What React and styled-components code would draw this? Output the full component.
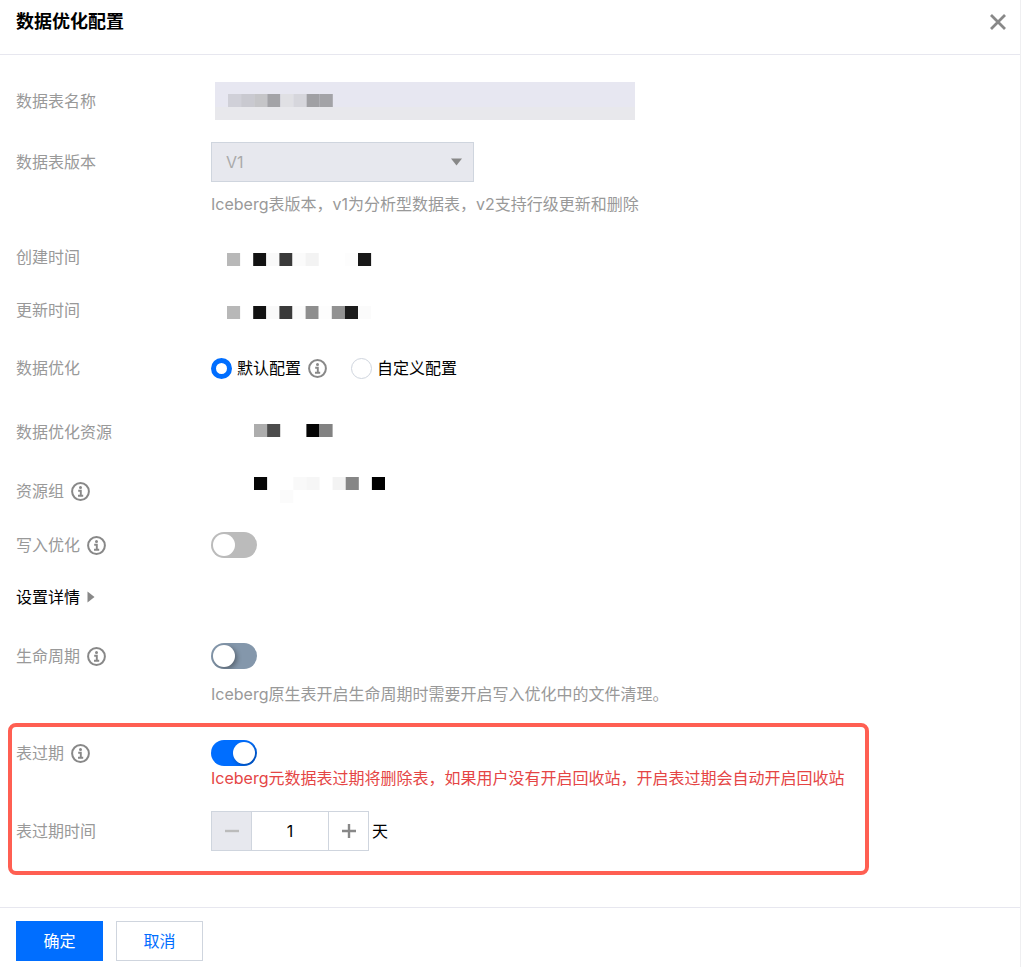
import React, { useState } from 'react';
import styled, { createGlobalStyle } from 'styled-components';

const GlobalStyle = createGlobalStyle`
  * {
    box-sizing: border-box;
  }
  body {
    margin: 0;
    background: #fff;
  }
  body, button, input, select {
    font-family: Inter, "Noto Sans CJK SC", sans-serif;
    font-size: 16px;
    line-height: 24px;
  }
`;

const Drawer = styled.main`
  display: flex;
  flex-direction: column;
  min-height: 100vh;
  border-right: 1px solid #efeff1;
  color: #000;
`;

const Header = styled.header`
  display: flex;
  align-items: center;
  justify-content: space-between;
  height: 55px;
  padding: 0 14px 11px 16px;
  border-bottom: 1px solid #e7e7ef;
`;

const Title = styled.h1`
  margin: 0;
  font-size: 18px;
  line-height: 24px;
  font-weight: 700;
`;

const CloseButton = styled.button`
  display: flex;
  padding: 0;
  border: 0;
  background: none;
  cursor: pointer;
`;

const Content = styled.form`
  flex: 1;
  padding: 27px 16px 32px;
`;

const Row = styled.div`
  display: grid;
  grid-template-columns: 195px 1fr;
  align-items: ${(p) => p.$align || 'center'};
  margin-top: ${(p) => p.$gap || 0}px;
`;

const Label = styled.label`
  display: flex;
  align-items: center;
  gap: 7px;
  color: #999;
`;

const Control = styled.div`
  display: flex;
  align-items: center;
`;

const Hint = styled.p`
  margin: ${(p) => p.$gap || 0}px 0 0 195px;
  color: ${(p) => (p.$warn ? '#e54545' : '#999')};
`;

const NameField = styled.div`
  position: relative;
  width: 420px;
  margin-left: 4px;
`;

const NameInput = styled.input`
  display: block;
  width: 100%;
  height: 38px;
  border: 0;
  background: linear-gradient(#e7e7f1 66%, #e8e8ec 66%);
`;

// blocks that cover the hidden value of the name field
const NameCover = styled.div`
  position: absolute;
  top: 8px;
  left: 13px;
`;

const Blocks = styled.svg`
  display: block;
  margin: 4px 0 0 ${(p) => p.$indent || 0}px;
`;

const SelectBox = styled.div`
  display: grid;
  align-items: center;
  width: 263px;

  & > * {
    grid-area: 1 / 1;
  }
  & > svg {
    justify-self: end;
    margin-right: 12px;
    pointer-events: none;
  }
`;

const Select = styled.select`
  appearance: none;
  width: 100%;
  height: 40px;
  padding: 0 14px;
  border: 1px solid #cfd5de;
  border-radius: 0;
  background: #e7e8ee;
  color: #aaa;
  opacity: 1;
`;

const RadioLabel = styled.label`
  display: flex;
  align-items: center;
  gap: 5px;
`;

const Radio = styled.input`
  appearance: none;
  width: 21px;
  height: 21px;
  margin: 0;
  border: 1px solid #cfd5de;
  border-radius: 50%;
  background: #fff;

  &:checked {
    border: 5px solid #006eff;
  }
`;

const IconGap = styled.span`
  display: flex;
  margin: 0 24px 0 7px;
`;

const Toggle = styled.input`
  appearance: none;
  display: flex;
  align-items: center;
  width: 46px;
  height: 26px;
  margin: 0;
  padding: 0 2px;
  border-radius: 13px;
  background: ${(p) => p.$off || '#8497ab'};
  overflow: hidden;
  cursor: pointer;

  &::before {
    content: '';
    width: 22px;
    height: 22px;
    border-radius: 50%;
    background: #fff;
    box-shadow: ${(p) => (p.disabled ? 'none' : '2px 2px 5px rgba(0, 0, 0, 0.35)')};
  }
  &:checked {
    justify-content: flex-end;
    background: #006eff;
  }
`;

const DetailButton = styled.button`
  display: flex;
  align-items: center;
  gap: 7px;
  margin-top: 27px;
  padding: 0;
  border: 0;
  background: none;
  color: #000;
  cursor: pointer;
`;

const ExpireBox = styled.section`
  max-width: 861px;
  margin: 17px 0 0 -8px;
  padding: 13px 4px 20px;
  border: 4px solid #ff5f52;
  border-radius: 8px;
`;

const Stepper = styled.div`
  display: flex;
  width: 158px;
  height: 40px;
  margin-right: 3px;
  border: 1px solid #cfd5de;
`;

const StepButton = styled.button`
  display: flex;
  align-items: center;
  justify-content: center;
  width: 39px;
  padding: 0;
  border: 0;
  background: #fff;
  color: #888;

  &:disabled {
    background: #e7e8ee;
    color: #bbb;
  }
`;

const StepInput = styled.input`
  flex: 1;
  min-width: 0;
  padding: 0;
  border: solid #cfd5de;
  border-width: 0 1px;
  text-align: center;
  color: #000;
`;

const Footer = styled.footer`
  display: flex;
  gap: 13px;
  padding: 13px 16px 6px;
  border-top: 1px solid #e7e7ef;
`;

const Button = styled.button`
  width: 87px;
  height: 40px;
  padding: 0;
  border: 1px solid ${(p) => (p.$primary ? '#006eff' : '#cfd5de')};
  background: ${(p) => (p.$primary ? '#006eff' : '#fff')};
  color: ${(p) => (p.$primary ? '#fff' : '#006eff')};
  cursor: pointer;
`;

const InfoIcon = () => (
  <svg width="19" height="19" viewBox="0 0 19 19" fill="none" stroke="#888" aria-hidden="true">
    <circle cx="9.5" cy="9.5" r="8.4" strokeWidth="2" />
    <circle cx="9.5" cy="5.6" r="1.5" fill="#888" stroke="none" />
    <path d="M7.2 8.7h2.6v5M7 13.7h5.2" strokeWidth="1.9" />
  </svg>
);

const CELL = 13.1;

// every row is a list of [column, colour]
const Mosaic = ({ rows, indent }) => {
  const cols = Math.max(...rows.flat().map(([col]) => col)) + 1;
  return (
    <Blocks $indent={indent} width={Math.ceil(cols * CELL)} height={rows.length * 13} aria-hidden="true">
      {rows.map((row, y) =>
        row.map(([col, fill]) => (
          <rect key={`${y}-${col}`} x={col * CELL} y={y * 13} width={CELL} height="13" fill={fill} />
        ))
      )}
    </Blocks>
  );
};

const nameBlocks = [[
  [0, '#d0d0d8'], [1, '#c9c9d0'], [2, '#c5c5c8'], [3, '#a3a3a7'],
  [4, '#e0e0e4'], [5, '#d6d6dc'], [6, '#a0a0a4'], [7, '#a3a3a7'],
]];
const createdBlocks = [[
  [0, '#b8b8b8'], [2, '#121212'], [3, '#f9f9f9'], [4, '#3a3a3a'],
  [5, '#fbfbfb'], [6, '#f3f3f3'], [9, '#fdfdfd'], [10, '#181818'],
]];
const updatedBlocks = [[
  [0, '#b8b8b8'], [2, '#121212'], [3, '#f9f9f9'], [4, '#3a3a3a'], [5, '#fbfbfb'],
  [6, '#8e8e8e'], [7, '#fdfdfd'], [8, '#929292'], [9, '#1c1c1c'], [10, '#fbfbfb'],
]];
const resourceBlocks = [[[0, '#adadad'], [1, '#4c4c4c'], [4, '#050505'], [5, '#828282']]];
const groupBlocks = [
  [[0, '#060606'], [3, '#f9f9f9'], [4, '#f6f6f6'], [6, '#f3f3f3'], [7, '#868686'], [9, '#000']],
  [[2, '#fbfbfb']],
];

const App = () => {
  const [mode, setMode] = useState('default');
  const [life, setLife] = useState(false);
  const [expire, setExpire] = useState(true);
  const [days, setDays] = useState(1);

  return (
    <Drawer>
      <GlobalStyle />
      <Header>
        <Title>数据优化配置</Title>
        <CloseButton type="button" aria-label="关闭">
          <svg width="16" height="16" viewBox="0 0 16 16" stroke="#888" strokeWidth="2.8">
            <path d="M1 1l14 14M15 1L1 15" />
          </svg>
        </CloseButton>
      </Header>

      <Content>
        <Row>
          <Label htmlFor="name">数据表名称</Label>
          <NameField>
            <NameInput id="name" disabled />
            <NameCover><Mosaic rows={nameBlocks} /></NameCover>
          </NameField>
        </Row>

        <Row $gap={22}>
          <Label htmlFor="version">数据表版本</Label>
          <SelectBox>
            <Select id="version" disabled defaultValue="V1">
              <option>V1</option>
              <option>V2</option>
            </Select>
            <svg width="11" height="8" viewBox="0 0 11 8" fill="#888">
              <path d="M0 0.5h11L5.5 7.5z" />
            </svg>
          </SelectBox>
        </Row>
        <Hint $gap={10}>Iceberg表版本，v1为分析型数据表，v2支持行级更新和删除</Hint>

        <Row $gap={29}>
          <Label as="span">创建时间</Label>
          <Mosaic rows={createdBlocks} indent={16} />
        </Row>
        <Row $gap={29}>
          <Label as="span">更新时间</Label>
          <Mosaic rows={updatedBlocks} indent={16} />
        </Row>

        <Row $gap={34}>
          <Label as="span">数据优化</Label>
          <Control>
            <RadioLabel>
              <Radio
                type="radio"
                name="mode"
                checked={mode === 'default'}
                onChange={() => setMode('default')}
              />
              默认配置
            </RadioLabel>
            <IconGap><InfoIcon /></IconGap>
            <RadioLabel>
              <Radio
                type="radio"
                name="mode"
                checked={mode === 'custom'}
                onChange={() => setMode('custom')}
              />
              自定义配置
            </RadioLabel>
          </Control>
        </Row>

        <Row $gap={40} $align="start">
          <Label as="span">数据优化资源</Label>
          <Mosaic rows={resourceBlocks} indent={43} />
        </Row>
        <Row $gap={29} $align="end">
          <Label as="span">资源组 <InfoIcon /></Label>
          <Mosaic rows={groupBlocks} indent={43} />
        </Row>

        <Row $gap={29}>
          <Label htmlFor="write">写入优化 <InfoIcon /></Label>
          <Toggle id="write" type="checkbox" disabled $off="#bbb" />
        </Row>

        <DetailButton type="button">
          设置详情
          <svg width="8" height="12" viewBox="0 0 8 12" fill="#888">
            <path d="M0.5 0.5v11L7.5 6z" />
          </svg>
        </DetailButton>

        <Row $gap={34}>
          <Label htmlFor="life">生命周期 <InfoIcon /></Label>
          <Toggle id="life" type="checkbox" checked={life} onChange={() => setLife(!life)} />
        </Row>
        <Hint $gap={13}>Iceberg原生表开启生命周期时需要开启写入优化中的文件清理。</Hint>

        <ExpireBox>
          <Row>
            <Label htmlFor="expire">表过期 <InfoIcon /></Label>
            <Toggle id="expire" type="checkbox" checked={expire} onChange={() => setExpire(!expire)} />
          </Row>
          <Hint $warn>Iceberg元数据表过期将删除表，如果用户没有开启回收站，开启表过期会自动开启回收站</Hint>
          <Row $gap={21}>
            <Label htmlFor="days">表过期时间</Label>
            <Control>
              <Stepper>
                <StepButton type="button" aria-label="减少" disabled={days <= 1} onClick={() => setDays(days - 1)}>
                  <svg width="14" height="14" viewBox="0 0 14 14" stroke="currentColor" strokeWidth="2.4">
                    <path d="M0 7h14" />
                  </svg>
                </StepButton>
                <StepInput id="days" value={days} onChange={(e) => setDays(Number(e.target.value) || 1)} />
                <StepButton type="button" aria-label="增加" onClick={() => setDays(days + 1)}>
                  <svg width="14" height="14" viewBox="0 0 14 14" stroke="currentColor" strokeWidth="2.4">
                    <path d="M0 7h14M7 0v14" />
                  </svg>
                </StepButton>
              </Stepper>
              天
            </Control>
          </Row>
        </ExpireBox>
      </Content>

      <Footer>
        <Button type="button" $primary>确定</Button>
        <Button type="button">取消</Button>
      </Footer>
    </Drawer>
  );
};

export default App;
